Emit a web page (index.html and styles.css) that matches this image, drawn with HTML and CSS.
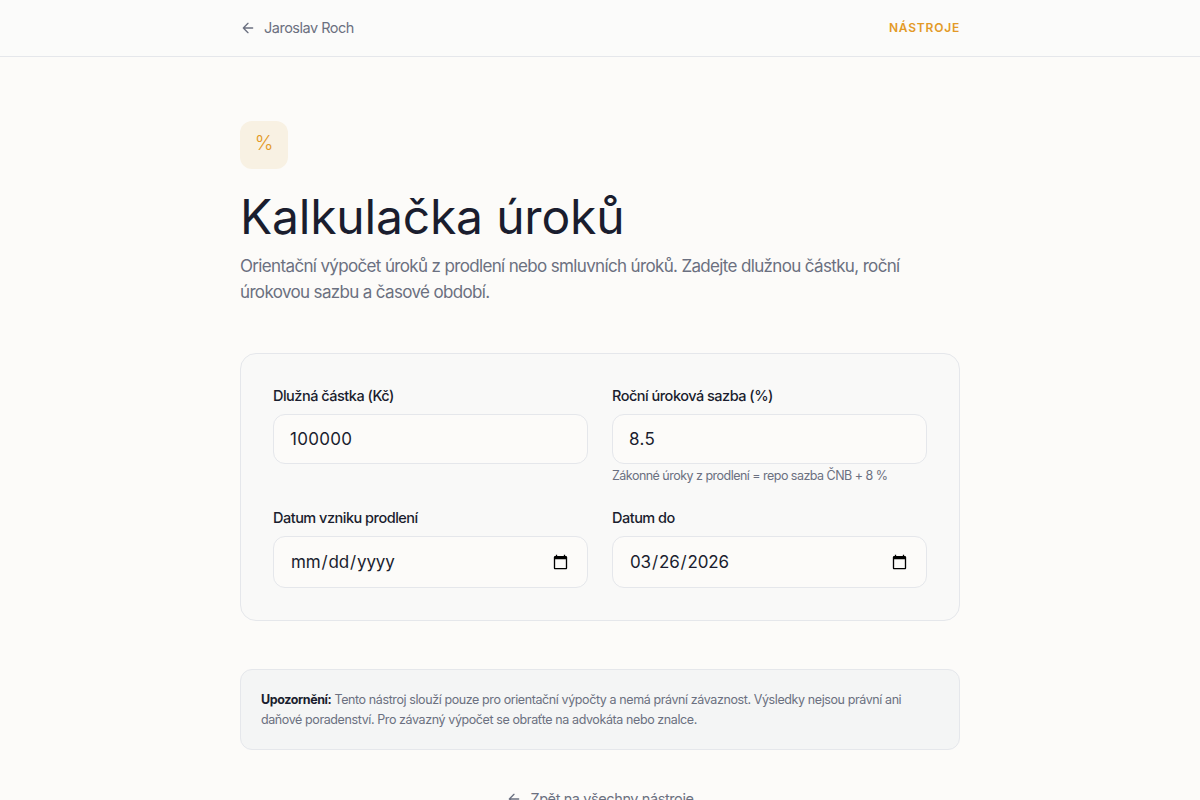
FILE: index.html
```html
<!DOCTYPE html>
<html lang="cs">

<head>
    <meta charset="UTF-8">
    <meta name="viewport" content="width=device-width, initial-scale=1.0">
    <title>Kalkulačka úroků</title>
    <link rel="stylesheet" href="styles.css">
</head>

<body>
    <header class="topbar">
        <div class="wrap topbar-inner">
            <a class="back" href="#">
                <svg class="arrow" viewBox="0 0 24 24" width="16" height="16"><path d="M19 12H5M12 19l-7-7 7-7"/></svg>
                Jaroslav Roch
            </a>
            <a class="section" href="#">NÁSTROJE</a>
        </div>
    </header>

    <main class="wrap content">
        <div class="icon-box">%</div>
        <h1>Kalkulačka úroků</h1>
        <p class="lead">Orientační výpočet úroků z prodlení nebo smluvních úroků. Zadejte dlužnou částku, roční úrokovou sazbu a časové období.</p>

        <form class="card">
            <div class="field">
                <label for="amount">Dlužná částka (Kč)</label>
                <input id="amount" type="number" value="100000">
            </div>
            <div class="field">
                <label for="rate">Roční úroková sazba (%)</label>
                <input id="rate" type="number" value="8.5">
                <p class="hint">Zákonné úroky z prodlení = repo sazba ČNB + 8 %</p>
            </div>
            <div class="field">
                <label for="from">Datum vzniku prodlení</label>
                <input id="from" type="date">
            </div>
            <div class="field">
                <label for="to">Datum do</label>
                <input id="to" type="date" value="2026-03-26">
            </div>
        </form>

        <div class="notice">
            <strong>Upozornění:</strong> Tento nástroj slouží pouze pro orientační výpočty a nemá právní závaznost. Výsledky nejsou právní ani daňové poradenství. Pro závazný výpočet se obraťte na advokáta nebo znalce.
        </div>

        <div class="all-tools">
            <a class="back" href="#">
                <svg class="arrow" viewBox="0 0 24 24" width="16" height="16"><path d="M19 12H5M12 19l-7-7 7-7"/></svg>
                Zpět na všechny nástroje
            </a>
        </div>
    </main>
</body>

</html>
```

FILE: styles.css
```css
* {
    box-sizing: border-box;
}

body {
    margin: 0;
    background-color: #fcfbf9;
    color: #1a1d2e;
    font-family: "Inter", "Noto Sans", sans-serif;
}

a {
    text-decoration: none;
}

.wrap {
    width: 720px;
    margin: 0 auto;
}

.topbar {
    height: 57px;
    background: #fbfbfa;
    border-bottom: 1px solid #e5e7eb;
}

.topbar-inner {
    height: 55px;
    display: flex;
    align-items: center;
    justify-content: space-between;
}

.back {
    display: inline-flex;
    align-items: center;
    gap: 8px;
    color: #6b7080;
    font-size: 14.5px;
    letter-spacing: -0.5px;
}

.arrow {
    fill: none;
    stroke: currentColor;
    stroke-width: 2;
    stroke-linecap: round;
    stroke-linejoin: round;
}

.section {
    color: #e39a26;
    font-size: 12px;
    font-weight: 600;
    letter-spacing: 0.8px;
}

.content {
    padding-top: 64px;
}

.icon-box {
    width: 48px;
    height: 48px;
    padding-top: 10px;
    border-radius: 12px;
    background: #f8f1e3;
    color: #e39a26;
    font-size: 20px;
    line-height: 24px;
    font-weight: 300;
    text-align: center;
}

h1 {
    margin: 20px 0 0;
    font-size: 48px;
    line-height: 56px;
    font-weight: 400;
    letter-spacing: -0.2px;
}

.lead {
    margin: 8px 0 0;
    color: #6b7080;
    font-size: 17px;
    line-height: 26px;
    letter-spacing: -0.65px;
}

.card {
    display: grid;
    grid-template-columns: 1fr 1fr;
    column-gap: 24px;
    row-gap: 23px;
    margin-top: 48px;
    padding: 32px;
    border: 1px solid #e5e7eb;
    border-radius: 16px;
    background: #f9f9f8;
}

label {
    display: block;
    margin-bottom: 8px;
    font-size: 14.5px;
    line-height: 20px;
    font-weight: 500;
    letter-spacing: -0.5px;
}

input {
    display: block;
    width: 100%;
    height: 50px;
    padding: 0 16px;
    border: 1px solid #e5e7eb;
    border-radius: 12px;
    background: #fcfbf9;
    color: #1a1d2e;
    font-family: inherit;
    font-size: 17px;
    letter-spacing: 0.3px;
    outline: none;
}

input[type="date"] {
    height: 52px;
    letter-spacing: -0.15px;
}

input[type="number"] {
    appearance: textfield;
}

.hint {
    margin: 3px 0 0;
    color: #6b7080;
    font-size: 12.5px;
    line-height: 18px;
    letter-spacing: -0.52px;
}

.notice {
    margin-top: 48px;
    padding: 20px;
    border: 1px solid #e5e7eb;
    border-radius: 12px;
    background: #f4f5f5;
    color: #6b7080;
    font-size: 12.5px;
    line-height: 19.5px;
    letter-spacing: -0.4px;
}

.notice strong {
    color: #1a1d2e;
    font-weight: 700;
}

.all-tools {
    margin-top: 40px;
    padding-bottom: 48px;
    text-align: center;
}

.all-tools .back {
    letter-spacing: -0.4px;
}
```
